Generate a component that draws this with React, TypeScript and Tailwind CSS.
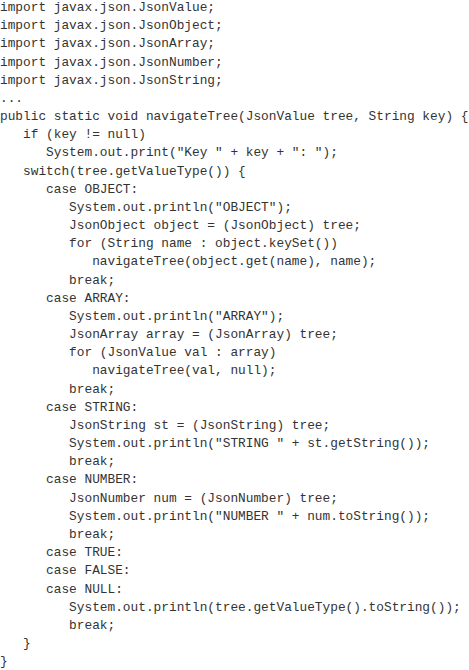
const lines: string[] = [
  "import javax.json.JsonValue;",
  "import javax.json.JsonObject;",
  "import javax.json.JsonArray;",
  "import javax.json.JsonNumber;",
  "import javax.json.JsonString;",
  "...",
  "public static void navigateTree(JsonValue tree, String key) {",
  "   if (key != null)",
  "      System.out.print(\"Key \" + key + \": \");",
  "   switch(tree.getValueType()) {",
  "      case OBJECT:",
  "         System.out.println(\"OBJECT\");",
  "         JsonObject object = (JsonObject) tree;",
  "         for (String name : object.keySet())",
  "            navigateTree(object.get(name), name);",
  "         break;",
  "      case ARRAY:",
  "         System.out.println(\"ARRAY\");",
  "         JsonArray array = (JsonArray) tree;",
  "         for (JsonValue val : array)",
  "            navigateTree(val, null);",
  "         break;",
  "      case STRING:",
  "         JsonString st = (JsonString) tree;",
  "         System.out.println(\"STRING \" + st.getString());",
  "         break;",
  "      case NUMBER:",
  "         JsonNumber num = (JsonNumber) tree;",
  "         System.out.println(\"NUMBER \" + num.toString());",
  "         break;",
  "      case TRUE:",
  "      case FALSE:",
  "      case NULL:",
  "         System.out.println(tree.getValueType().toString());",
  "         break;",
  "   }",
  "}",
];

export default function App() {
  return (
    <div className="w-[469px] h-[670px] bg-white overflow-hidden">
      <pre className="font-['Liberation_Mono',monospace] text-[12.8px] leading-[18.17px] text-[#333] pl-0 -mt-[1px] whitespace-pre">
        {lines.map((line, i) => (
          <div key={i}>{line}</div>
        ))}
      </pre>
    </div>
  );
}
